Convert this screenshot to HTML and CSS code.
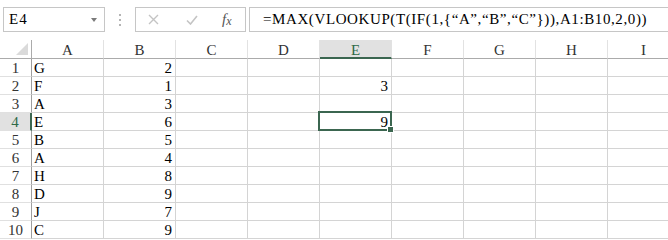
FILE: index.html
```html
<!DOCTYPE html>
<html lang="zh">
<head>
    <meta charset="UTF-8">
    <title>VLOOKUP</title>
    <link rel="stylesheet" href="styles.css">
</head>
<body>
    <!-- Строка формул -->
    <div class="formula-bar">
        <div class="name-box">
            <span>E4</span>
            <span class="drop-arrow"></span>
        </div>
        <div class="grip"><i></i><i></i><i></i></div>
        <div class="fx-buttons">
            <svg class="btn-cancel" width="11" height="11" viewBox="0 0 11 11">
                <path d="M1 1 L10 10 M10 1 L1 10" stroke="#c4c4c4" stroke-width="1.4"/>
            </svg>
            <svg class="btn-enter" width="12" height="10" viewBox="0 0 12 10">
                <path d="M1 5.5 L4.5 9 L11 1" fill="none" stroke="#c4c4c4" stroke-width="1.6"/>
            </svg>
            <span class="btn-fx">f<sub>x</sub></span>
        </div>
        <div class="formula-input">=MAX(VLOOKUP(T(IF(1,{“A”,“B”,“C”})),A1:B10,2,0))</div>
    </div>

    <!-- Таблица -->
    <div class="sheet" id="sheet">
        <div class="corner">
            <svg width="32" height="18" viewBox="0 0 32 18">
                <polygon points="28,3 28,15 16,15" fill="#dadada"/>
            </svg>
        </div>
    </div>

    <script>
        const cols = ['A', 'B', 'C', 'D', 'E', 'F', 'G', 'H', 'I'];
        const dataA = ['G', 'F', 'A', 'E', 'B', 'A', 'H', 'D', 'J', 'C'];
        const dataB = [2, 1, 3, 6, 5, 4, 8, 9, 7, 9];
        const dataE = { 2: '3', 4: '9' };
        const sheet = document.getElementById('sheet');

        // Заголовки столбцов
        cols.forEach(c => {
            const h = document.createElement('div');
            h.className = 'col-head' + (c === 'E' ? ' active' : '');
            h.innerText = c;
            sheet.appendChild(h);
        });

        // Строки
        for (let r = 1; r <= 10; r++) {
            const rh = document.createElement('div');
            rh.className = 'row-head' + (r === 4 ? ' active' : '');
            rh.innerText = r;
            sheet.appendChild(rh);

            cols.forEach(c => {
                const cell = document.createElement('div');
                cell.className = 'cell';
                if (c === 'A') {
                    cell.innerText = dataA[r - 1];
                } else if (c === 'B') {
                    cell.classList.add('num');
                    cell.innerText = dataB[r - 1];
                } else if (c === 'E' && dataE[r]) {
                    cell.classList.add('num');
                    cell.innerText = dataE[r];
                }
                if (c === 'E' && r === 4) {
                    cell.classList.add('selected');
                    const sel = document.createElement('span');
                    sel.className = 'selection';
                    const handle = document.createElement('span');
                    handle.className = 'fill-handle';
                    sel.appendChild(handle);
                    cell.appendChild(sel);
                }
                sheet.appendChild(cell);
            });
        }
    </script>
</body>
</html>
```

FILE: styles.css
```css
body {
    margin: 0;
    width: 668px;
    height: 240px;
    overflow: hidden;
    background: #ffffff;
    font-family: 'Liberation Serif', 'Times New Roman', serif;
    font-size: 15px;
    color: #000;
}

/* Строка формул */
.formula-bar {
    display: flex;
    height: 40px;
    padding: 7px 0 0 3px;
    box-sizing: border-box;
}

.name-box {
    width: 102px;
    height: 25px;
    border: 1px solid #c6c6c6;
    box-sizing: border-box;
    display: flex;
    align-items: center;
    justify-content: space-between;
    padding: 0 7px 0 5px;
    letter-spacing: 1px;
}

.drop-arrow {
    width: 0;
    height: 0;
    border-left: 3px solid transparent;
    border-right: 3px solid transparent;
    border-top: 4px solid #7a7a7a;
}

.grip {
    width: 30px;
    display: flex;
    flex-direction: column;
    align-items: center;
    justify-content: center;
    gap: 3px;
    height: 25px;
}

.grip i {
    width: 2px;
    height: 2px;
    background: #b4b4b4;
}

.fx-buttons {
    width: 111px;
    height: 25px;
    border: 1px solid #c6c6c6;
    box-sizing: border-box;
    display: flex;
    align-items: center;
    padding-left: 12px;
}

.btn-enter {
    margin-left: 27px;
}

.btn-fx {
    margin-left: 24px;
    font-family: 'Liberation Serif', serif;
    font-style: italic;
    font-size: 15px;
    color: #555;
}

.btn-fx sub {
    font-size: 12px;
    vertical-align: -1px;
}

.formula-input {
    flex: 1;
    height: 25px;
    margin-left: 3px;
    margin-right: -3px;
    border: 1px solid #c6c6c6;
    box-sizing: border-box;
    display: flex;
    align-items: center;
    padding-left: 13px;
    letter-spacing: 0.6px;
    white-space: nowrap;
}

/* Сетка листа */
.sheet {
    display: grid;
    grid-template-columns: 32px repeat(9, 72px);
    grid-template-rows: 19px;
    grid-auto-rows: 18px;
}

.sheet > div {
    box-sizing: border-box;
    border-right: 1px solid #d4d4d4;
    border-bottom: 1px solid #d4d4d4;
    line-height: 18px;
}

.corner {
    line-height: 0 !important;
    border-bottom-color: #ababab !important;
    border-right-color: #ababab !important;
}

.col-head {
    text-align: center;
    color: #333;
    border-right-color: #e2e2e2 !important;
    border-bottom-color: #ababab !important;
    line-height: 20px !important;
}

.col-head.active {
    background: #e1e1e1;
    color: #2f6a48;
    border-bottom: 2px solid #3b6650 !important;
}

.row-head {
    text-align: center;
    color: #333;
    border-right-color: #9e9e9e !important;
    border-bottom-color: #e0e0e0 !important;
}

.row-head.active {
    background: #e1e1e1;
    color: #2f6a48;
    border-right: 2px solid #3b6650 !important;
}

.cell {
    padding: 0 2px;
    white-space: nowrap;
}

.cell.num {
    text-align: right;
    padding-right: 3px;
}

.cell.selected {
    position: relative;
}

/* Рамка выделенной ячейки */
.selection {
    position: absolute;
    top: -2px;
    left: -2px;
    right: -1px;
    bottom: -1px;
    border: 2px solid #3b6650;
    z-index: 2;
}

.fill-handle {
    position: absolute;
    right: -4px;
    bottom: -4px;
    width: 5px;
    height: 5px;
    background: #3b6650;
    border: 1px solid #fff;
}
```
